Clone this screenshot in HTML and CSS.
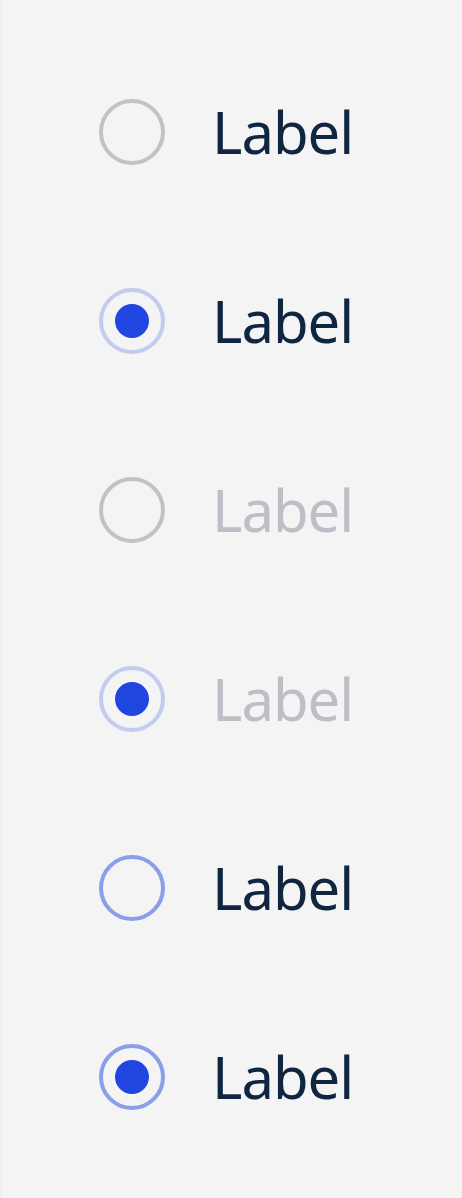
FILE: index.html
```html
<!DOCTYPE html>
<html lang="en">
<head>
    <meta charset="UTF-8">
    <meta name="viewport" content="width=device-width, initial-scale=1.0">
    <title>Radio</title>
    <link rel="stylesheet" href="styles.css">
</head>
<body>
    <div class="list">
        <label class="radio">
            <span class="circle"></span>
            <span class="text">Label</span>
        </label>
        <label class="radio checked">
            <span class="circle"></span>
            <span class="text">Label</span>
        </label>
        <label class="radio disabled">
            <span class="circle"></span>
            <span class="text">Label</span>
        </label>
        <label class="radio checked disabled">
            <span class="circle"></span>
            <span class="text">Label</span>
        </label>
        <label class="radio hover">
            <span class="circle"></span>
            <span class="text">Label</span>
        </label>
        <label class="radio checked hover">
            <span class="circle"></span>
            <span class="text">Label</span>
        </label>
    </div>
</body>
</html>
```
FILE: styles.css
```css
html, body {
    margin: 0;
    padding: 0;
    background-color: #f4f4f5;
}
body {
    font-family: "Noto Sans", "Open Sans", sans-serif;
    border-left: 2px solid #f1eefa;
    min-height: 1198px;
    box-sizing: border-box;
}
.list {
    padding: 37px 0 0 97px;
    display: flex;
    flex-direction: column;
}
.radio {
    height: 189px;
    display: flex;
    align-items: center;
    gap: 47px;
}
.circle {
    width: 58px;
    height: 58px;
    border: 4px solid #bfc3c8;
    border-radius: 50%;
    display: flex;
    align-items: center;
    justify-content: center;
    flex-shrink: 0;
}
.checked .circle {
    border-color: #c3cbf0;
}
.checked .circle::after {
    content: "";
    width: 34px;
    height: 34px;
    border-radius: 50%;
    background-color: #2146e0;
}
.hover .circle {
    border-color: #8b9ee9;
}
.text {
    font-size: 58px;
    letter-spacing: -1px;
    color: #0f2540;
    line-height: 1;
}
.disabled .text {
    color: #bcc0c6;
}
```
